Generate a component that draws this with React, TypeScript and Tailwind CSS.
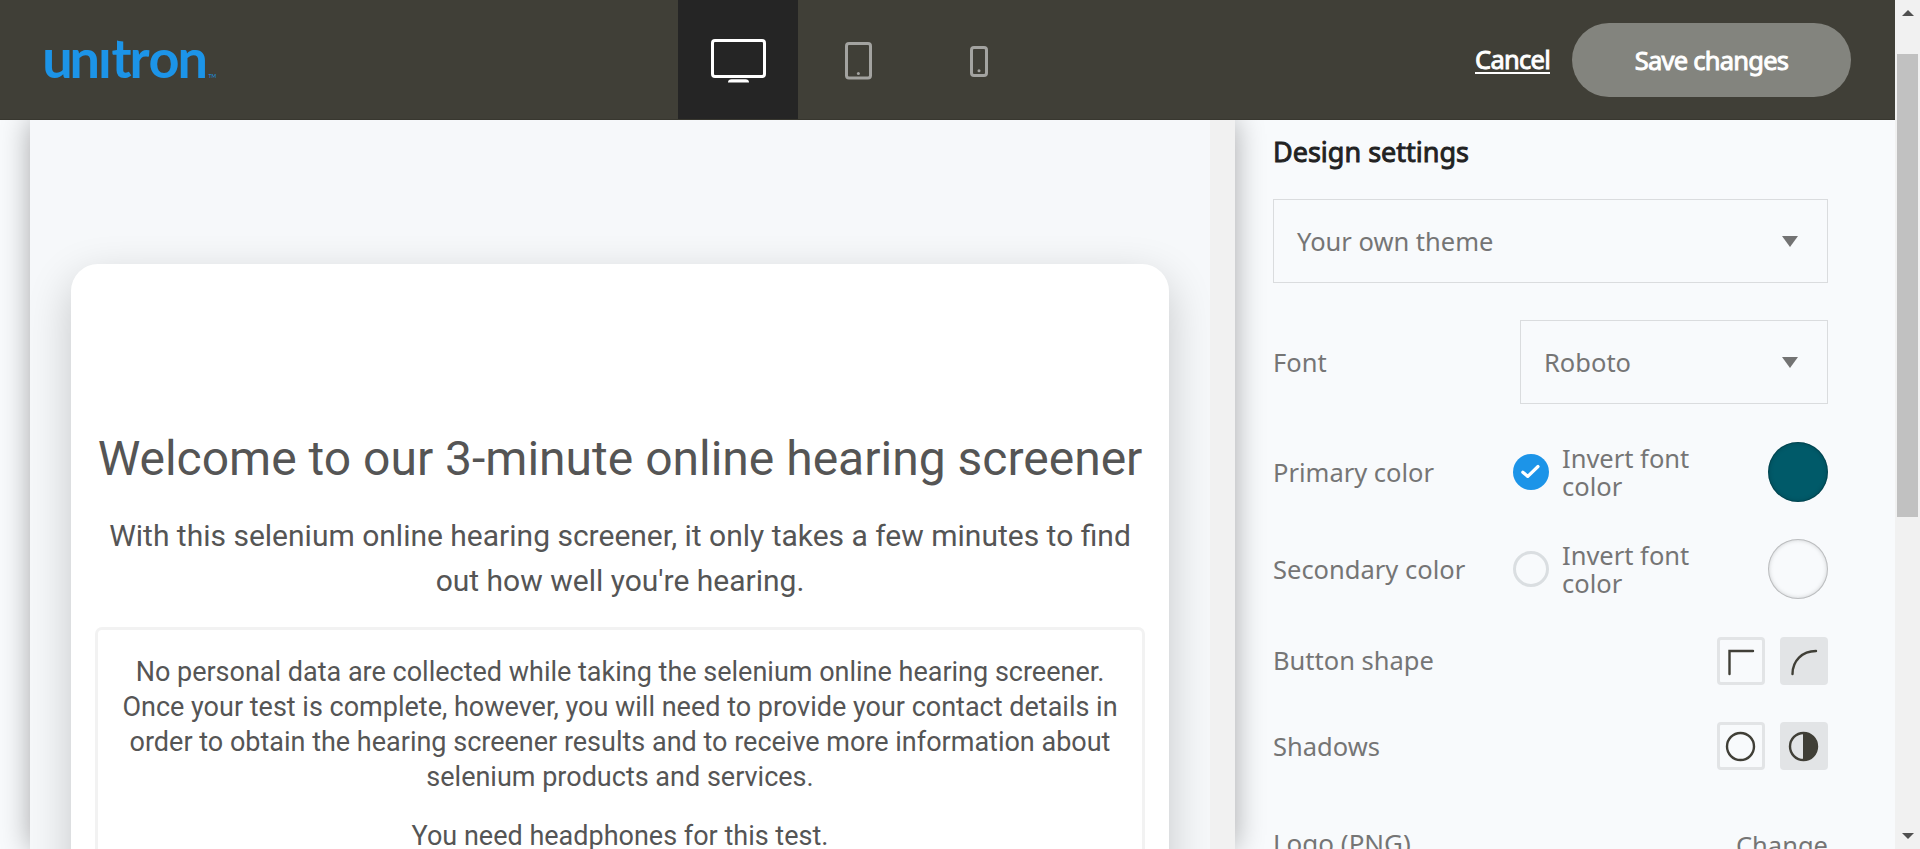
import React from "react";

const LOGO_LETTERS = ["u", "n", "ı", "t", "r", "o", "n"];
const LOGO_X = "-2.8 24.5 53 66.5 84.5 103.5 132.5";

function Logo() {
  return (
    <svg width="174" height="42" viewBox="0 0 174 42" className="overflow-visible" aria-label="unitron">
      <text x={LOGO_X} y="38.300" fontFamily="Lato" fontWeight="700" fontSize="54" fill="#1c94e8">
        {LOGO_LETTERS.join("")}
      </text>
      <path d="M72 0.500L78 2V14H72Z" fill="#1c94e8" />
      <text x="163.500" y="38" fontFamily="Lato" fontSize="5" fill="#1c94e8">
        TM
      </text>
    </svg>
  );
}

function Caret() {
  return (
    <svg width="16" height="11" viewBox="0 0 16 11" className="shrink-0">
      <path d="M0 0H16L8 11Z" fill="#737373" />
    </svg>
  );
}

function Select({ value, className }: { value: string; className: string }) {
  return (
    <div className={`flex h-[84px] shrink-0 items-center justify-between border border-[#dadcde] pr-[29px] pl-[23px] ${className}`}>
      <span className="pb-px">{value}</span>
      <Caret />
    </div>
  );
}

function ColorRow({ label, checked, swatch }: { label: string; checked: boolean; swatch: string }) {
  return (
    <div className="flex h-[60px] items-center">
      <span className="w-[240px] shrink-0 pb-px">{label}</span>
      <span
        className={`flex size-9 shrink-0 items-center justify-center rounded-full ${checked ? "bg-[#1c94e8]" : "border-3 border-[#dadee1]"}`}
      >
        {checked && (
          <svg width="20" height="16" viewBox="0 0 20 16">
            <path d="M1.800 8.200L6.800 12.400L17 2.500" fill="none" stroke="#fff" strokeWidth="3.200" strokeLinecap="round" strokeLinejoin="round" />
          </svg>
        )}
      </span>
      <span className="ml-[13px] w-[150px] leading-7">Invert font color</span>
      <span
        className={`ml-auto size-[60px] rounded-full shadow-[inset_0_0_0_1px_rgba(0,0,0,0.15),inset_0_0_5px_rgba(0,0,0,0.25)] ${swatch}`}
      />
    </div>
  );
}

function Choice({ active, children }: { active?: boolean; children: React.ReactNode }) {
  return (
    <span className={`flex size-12 items-center justify-center rounded-[4px] border-3 border-[#e2e4e6] ${active ? "bg-[#e2e4e6]" : ""}`}>
      <svg width="42" height="42" viewBox="3 3 42 42" fill="none" stroke="#403f37" strokeWidth="2.400" strokeLinecap="round">
        {children}
      </svg>
    </span>
  );
}

function Header() {
  return (
    <header className="flex h-[120px] shrink-0 border-b border-[#38372f] bg-[#403f37]">
      <div className="w-[678px] pt-10 pl-[45px]">
        <Logo />
      </div>
      <div className="flex h-[119px] w-[360px] text-[#a3a3a0]">
        <div className="flex w-[120px] bg-[#252525] text-white">
          <svg width="120" height="119" viewBox="0 0 120 119" fill="none" stroke="currentColor" strokeWidth="3">
            <rect x="34.500" y="40.500" width="52" height="36" rx="2.500" />
            <path d="M50 82.500C50 80.500 51.500 79.300 53.500 79.300H67.500C69.500 79.300 71 80.500 71 82.500Z" fill="currentColor" stroke="none" />
          </svg>
        </div>
        <svg width="120" height="119" viewBox="0 0 120 119" fill="none" stroke="currentColor" strokeWidth="3">
          <rect x="48.500" y="43.500" width="24" height="34.500" rx="2.500" />
          <circle cx="60.400" cy="73.500" r="1.500" fill="currentColor" stroke="none" />
        </svg>
        <svg width="120" height="119" viewBox="0 0 120 119" fill="none" stroke="currentColor" strokeWidth="3">
          <rect x="53.500" y="47.500" width="15" height="28" rx="2.500" />
          <circle cx="61" cy="70.700" r="1.500" fill="currentColor" stroke="none" />
        </svg>
      </div>
      <div className="flex flex-1 items-center justify-end pr-11 text-[25.5px] tracking-[-0.75px] text-white [-webkit-text-stroke:0.9px_#ffffff]">
        <span className="mt-px mr-[22px] border-b-2 border-white leading-[26px]">Cancel</span>
        <button className="h-[74px] w-[279px] rounded-full bg-[#83847e] pt-0.5">Save changes</button>
      </div>
    </header>
  );
}

function Preview() {
  return (
    <main className="z-10 ml-[30px] flex w-[1205px] shrink-0 shadow-[0_0_28px_rgba(0,0,0,0.33)]">
      <div className="w-[1180px] overflow-hidden bg-[#f6f8fa] pt-36 pl-[41px]">
        <section className="flex h-[700px] w-[1098px] flex-col items-center rounded-[27px] bg-white pt-[163px] text-center font-[Roboto,sans-serif] text-[#555555] shadow-[0_15px_45px_rgba(0,0,0,0.2)]">
          <h1 className="text-[48px] leading-[64px] whitespace-nowrap">Welcome to our 3-minute online hearing screener</h1>
          <p className="mt-[22px] text-[30px] leading-[45px] whitespace-nowrap">
            With this selenium online hearing screener, it only takes a few minutes to find
            <br />
            out how well you're hearing.
          </p>
          <div className="mt-6 h-[400px] w-[1050px] rounded-[7px] border-3 border-[#f2f2f2] pt-[25px] text-[27px] leading-[35px] whitespace-nowrap">
            <p>
              No personal data are collected while taking the selenium online hearing screener.
              <br />
              Once your test is complete, however, you will need to provide your contact details in
              <br />
              order to obtain the hearing screener results and to receive more information about
              <br />
              selenium products and services.
            </p>
            <p className="mt-6">You need headphones for this test.</p>
          </div>
        </section>
      </div>
      <div className="w-[25px] bg-[#f1f1f1]" />
    </main>
  );
}

function Settings() {
  return (
    <aside className="flex flex-1 flex-col bg-[#f8fafc] pt-[14px] pr-[67px] pl-[38px] text-[25.5px] leading-[36px] text-[#757575]">
      <h2 className="text-[27px] text-[#222222] [-webkit-text-stroke:0.9px_#222222]">Design settings</h2>
      <Select value="Your own theme" className="mt-[29px] w-full" />
      <div className="mt-[37px] flex items-center justify-between">
        <span>Font</span>
        <Select value="Roboto" className="w-[308px]" />
      </div>
      <div className="mt-[38px] flex flex-col gap-[37px]">
        <ColorRow label="Primary color" checked swatch="bg-[#005a69]" />
        <ColorRow label="Secondary color" checked={false} swatch="bg-[#f8fafc]" />
      </div>
      <div className="mt-[38px] flex h-12 items-center gap-[15px]">
        <span className="mr-auto pb-0.5">Button shape</span>
        <Choice>
          <path d="M12.500 37V14H36" />
        </Choice>
        <Choice active>
          <path d="M12.500 37C12.500 24 22 14 36 14" />
        </Choice>
      </div>
      <div className="mt-[37px] flex h-12 items-center gap-[15px]">
        <span className="mr-auto">Shadows</span>
        <Choice>
          <circle cx="23.500" cy="24.500" r="13.500" />
        </Choice>
        <Choice active>
          <circle cx="23.500" cy="24.500" r="13.500" />
          <path d="M23 11A13.500 13.500 0 0 1 23 38Z" fill="#403f37" stroke="none" />
        </Choice>
      </div>
      <div className="mt-[55px] flex justify-between whitespace-nowrap">
        <span className="text-[26px]">Logo (PNG)</span>
        <span className="pt-0.5">Change</span>
      </div>
    </aside>
  );
}

export default function App() {
  return (
    <div className="flex h-[849px] w-[1920px] overflow-hidden bg-[#f8fafc] font-['Noto_Sans',sans-serif]">
      <div className="flex w-[1895px] flex-col">
        <Header />
        <div className="flex h-[729px] overflow-hidden">
          <Preview />
          <Settings />
        </div>
      </div>
      <div className="flex w-[25px] flex-col items-center bg-[#f1f1f1] py-[10px]">
        <svg width="12" height="6" viewBox="0 0 12 6">
          <path d="M0 6L6 0L12 6Z" fill="#505050" />
        </svg>
        <div className="mt-[38px] h-[463px] w-[21px] bg-[#c1c1c1]" />
        <svg width="12" height="6" viewBox="0 0 12 6" className="mt-auto">
          <path d="M0 0H12L6 6Z" fill="#505050" />
        </svg>
      </div>
    </div>
  );
}
